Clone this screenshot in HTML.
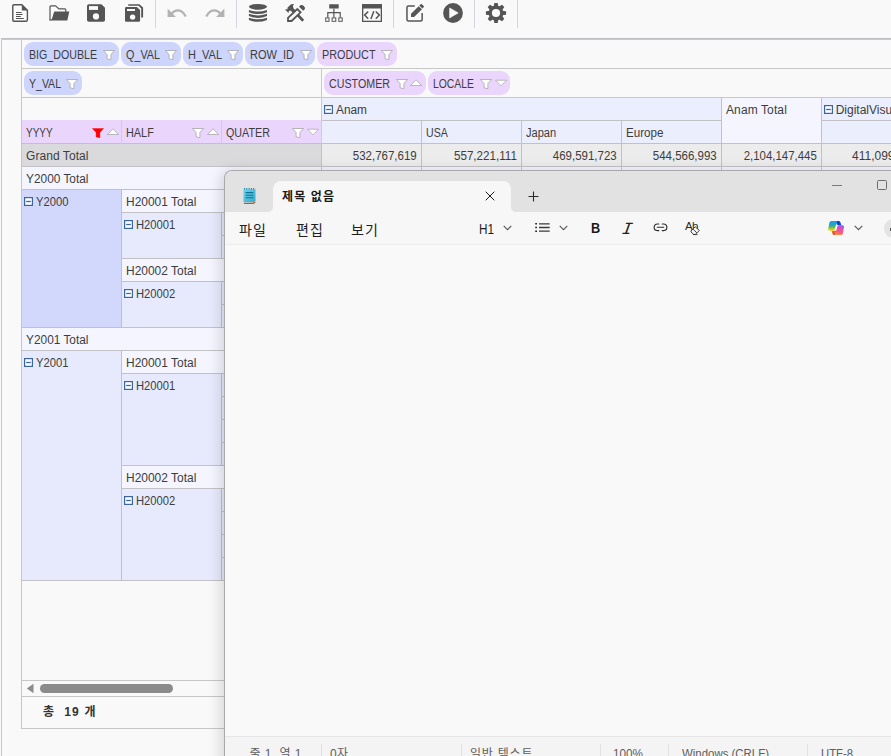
<!DOCTYPE html><html lang="ko"><head>
<meta charset="utf-8">
<title>Pivot</title>
<style>
html,body{margin:0;padding:0;}
body{width:891px;height:756px;overflow:hidden;position:relative;background:#f9f9f9;font-family:"Liberation Sans","Noto Sans CJK KR",sans-serif;font-size:12px;color:#333;}
.abs{position:absolute;}
#tb{position:absolute;left:0;top:0;width:891px;height:38px;background:#f9f9f9;}
#tb svg{position:absolute;}
.sep{position:absolute;top:0;width:1px;height:28px;background:#d3d6e0;}
#tbline{position:absolute;left:1px;top:38px;width:890px;height:1px;background:#bebec5;box-shadow:0 1px 0 #c9c9d0;}
#lline{position:absolute;left:1px;top:38px;width:1px;height:718px;background:#c6c7d2;}
#grid{position:absolute;left:21px;top:39px;width:870px;height:690px;background:#f9f9f9;border-left:1px solid #c6c6c6;border-bottom:1px solid #c6c6c6;box-sizing:border-box;}
.pill{position:absolute;height:24px;border-radius:9px;background:#cdd5fc;box-sizing:border-box;}
.pill.pp{background:#ead6fc;}
.pill span{position:absolute;left:5px;top:1px;line-height:24px;white-space:nowrap;color:#3d3d3d;}
.flt{position:absolute;}
.hl{position:absolute;height:1px;background:#c8c8c8;}
.vl{position:absolute;width:1px;background:#c8c8c8;}
.cell{position:absolute;box-sizing:border-box;border-right:1px solid #c2c2c6;border-bottom:1px solid #c2c2c6;line-height:25px;padding-left:4px;white-space:nowrap;overflow:hidden;color:#3d3d3d;}
.cell.num{text-align:right;padding-right:4px;padding-left:0;}
.cell.num .t{transform-origin:100% 50%;}
.t{display:inline-block;transform-origin:0 50%;white-space:nowrap;}
.mn{display:inline-block;vertical-align:0.2px;margin-right:2.7px;margin-left:-2px;}
.hp{background:#ead6fc;line-height:27px !important;border-right-color:#cfcdd8 !important;}
.hb{background:#ebeefc;}
.hl2{background:#f4f5fe;}
.gt{background:#dadadc;}
.gd{background:#ececec;}
.tot{background:#f4f5fe;}
.rh{background:#e6eafc;}
.sel{background:#d1d8fb;}
.foot{font-weight:bold;font-size:12px;line-height:22px;color:#333;}
#np{position:absolute;left:224px;top:170px;width:700px;height:620px;border-left:1px solid #a9a9ab;border-top:1px solid #a9a9ab;border-radius:8px 0 0 0;background:#e2e2e2;box-shadow:-1px 3px 13px 3px rgba(0,0,0,.13);overflow:hidden;}
#np-in{position:absolute;left:0;top:-1px;width:700px;height:620px;}
#np-title{position:absolute;left:0;top:0;width:700px;height:42px;background:#e2e2e2;}
#np-tab{position:absolute;left:48px;top:11px;width:238px;height:31px;background:#f7f7f7;border-radius:8px 8px 0 0;}
#np-tabl{position:absolute;left:43px;top:37px;width:5px;height:5px;background:radial-gradient(circle at 0 0,#e2e2e2 4.5px,#f7f7f7 5.5px);}
#np-tabr{position:absolute;left:286px;top:37px;width:5px;height:5px;background:radial-gradient(circle at 100% 0,#e2e2e2 4.5px,#f7f7f7 5.5px);}
#np-menu{position:absolute;left:0;top:42px;width:700px;height:32px;background:#f7f7f7;border-bottom:1px solid #ececec;}
#np-text{position:absolute;left:0;top:75px;width:700px;height:491px;background:#f9f9f9;}
#np-status{position:absolute;left:0;top:566px;width:700px;height:60px;background:#f4f4f4;border-top:1px solid #e6e6e6;}
#np-ttl{font-weight:bold;font-size:12px;line-height:22px;color:#1a1a1a;}
.mi{font-size:14px;line-height:20px;color:#1e1e1e;}
.st{font-size:12px;line-height:20px;color:#5e5e5e;}
.ssep{top:574px;width:1px;height:30px;background:#e1e1e1;}

</style>
</head>
<body>
<div id="tb">
<!-- new file -->
<svg style="left:11px;top:3px" width="18" height="20" viewBox="0 0 18 20"><path d="M2.9 1.8H10.8L16.4 7.4V17.1Q16.4 18.2 15.3 18.2H2.9Q1.8 18.2 1.8 17.1V2.9Q1.8 1.8 2.9 1.8Z" fill="#fbfbfb" stroke="#555" stroke-width="1.4"></path><path d="M10.8 1.4L16.8 7.4H10.8Z" fill="#555"></path><path d="M5 9.5H10.7M5 11.5H11.7M5 13.5H9.8M5 15.5H12.8" stroke="#555" stroke-width="1"></path></svg>
<!-- open -->
<svg style="left:48px;top:4px" width="22" height="18" viewBox="0 0 22 18"><path d="M2 16V2.9Q2 1.9 3 1.9H7.6L10.8 4.8H16.8Q17.8 4.8 17.8 5.8V8" fill="#fbfbfb" stroke="#555" stroke-width="1.2" stroke-linejoin="round"></path><path d="M6.2 7.4H21.3L19.3 16.6H3.4Z" fill="#555"></path><path d="M1.4 16H4" stroke="#555" stroke-width="1.2"></path></svg>
<!-- save -->
<svg style="left:87px;top:3px" width="19" height="20" viewBox="0 0 19 20"><path d="M1.8 1.2H14.4L18 4.7V16.9Q18 18.7 16.2 18.7H1.8Q0 18.7 0 16.9V3Q0 1.2 1.8 1.2Z" fill="#555"></path><rect x="2" y="3.1" width="9" height="3.8" fill="#fafafa"></rect><circle cx="9" cy="13.4" r="3.1" fill="#fafafa"></circle></svg>
<!-- save all -->
<svg style="left:124px;top:3px" width="20" height="20" viewBox="0 0 20 20"><path d="M4.2 1.2H15.4L19.1 4.6V14.6H17.2V5.4L14.6 2.8H4.2Z" fill="#555"></path><path d="M2.2 4H12.9L16.1 7V17.5Q16.1 18.7 14.9 18.7H2.2Q1 18.7 1 17.5V5.2Q1 4 2.2 4Z" fill="#555"></path><rect x="3" y="6" width="8" height="2" fill="#fafafa"></rect><circle cx="8.6" cy="14.1" r="2.7" fill="#fafafa"></circle></svg>
<div class="sep" style="left:155px"></div>
<!-- undo -->
<svg style="left:166px;top:7px" width="21" height="12" viewBox="0 0 21 12"><path d="M1.6 1.5V9.9H9.9Z" fill="#b3b3b3"></path><path d="M5.6 6.6C9 2.4 15.6 1.2 19.7 9.6" fill="none" stroke="#b3b3b3" stroke-width="2.2"></path></svg>
<!-- redo -->
<svg style="left:204.8px;top:7px" width="21" height="12" viewBox="0 0 21 12"><g transform="translate(21,0) scale(-1,1)"><path d="M1.6 1.5V9.9H9.9Z" fill="#b3b3b3"></path><path d="M5.6 6.6C9 2.4 15.6 1.2 19.7 9.6" fill="none" stroke="#b3b3b3" stroke-width="2.2"></path></g></svg>
<div class="sep" style="left:236px"></div>
<!-- db -->
<svg style="left:248px;top:3px" width="20" height="20" viewBox="0 0 20 20"><ellipse cx="9.95" cy="3.8" rx="9.05" ry="2.9" fill="#555"></ellipse><path d="M0.9 6.9Q10 10.1 19 6.9V9.2Q10 12.9 0.9 9.2Z" fill="#555"></path><path d="M0.9 10.8Q10 14.0 19 10.8V13.1Q10 16.8 0.9 13.1Z" fill="#555"></path><path d="M0.9 14.7Q10 17.9 19 14.7V17.0Q10 20.7 0.9 17.0Z" fill="#555"></path></svg>
<!-- tools -->
<svg style="left:282px;top:2px" width="26" height="22" viewBox="0 0 26 22"><path d="M10.6 7.6L21.2 18.8" stroke="#555" stroke-width="2.7"></path><path d="M3 7.6L5.4 7.2L5.6 5.4L9 2.2L12 1.9L10.9 4L11.6 6.6L13.6 8.6L11 11L8.8 8.7L7 8.7L6.5 10.9Z" fill="#555"></path><path d="M6 15.8L15.3 7.1L18.6 10.3L9.6 19H6Z" fill="#fafafa" stroke="#555" stroke-width="1.8" stroke-linejoin="miter"></path><path d="M17 4.7L18.8 3.1Q20 2.5 21.2 3.5L22.6 5Q23.5 6.2 22.6 7.3L21.2 8.7Z" fill="#555"></path></svg>
<!-- org -->
<svg style="left:324px;top:4px" width="20" height="19" viewBox="0 0 20 19"><rect x="5.2" y="0.2" width="9.5" height="4.3" rx="0.5" fill="#555"></rect><path d="M9.9 4.5V13.4M3.8 13.4V8.6H16.2V13.4" fill="none" stroke="#555" stroke-width="1.2"></path><rect x="1.7" y="13.9" width="3.3" height="3.4" fill="#fdfdfd" stroke="#555" stroke-width="1"></rect><rect x="8.1" y="13.9" width="3.7" height="3.4" fill="#fdfdfd" stroke="#555" stroke-width="1"></rect><rect x="14.8" y="13.9" width="3.4" height="3.4" fill="#fdfdfd" stroke="#555" stroke-width="1"></rect></svg>
<!-- code -->
<svg style="left:361px;top:3px" width="22" height="20" viewBox="0 0 22 20"><rect x="1.65" y="1.85" width="18.7" height="16.5" fill="#fafafa" stroke="#555" stroke-width="1.3"></rect><rect x="1" y="1.2" width="20" height="4.3" fill="#555"></rect><path d="M7.2 8.5L3.6 12.1L7.2 15.7M14.8 8.5L18.4 12.1L14.8 15.7M12.8 8.2L9.9 15.9" fill="none" stroke="#555" stroke-width="1.5"></path></svg>
<div class="sep" style="left:393px"></div>
<!-- edit -->
<svg style="left:405px;top:3px" width="20" height="20" viewBox="0 0 20 20"><path d="M9.8 2.95H3.5Q1.95 2.95 1.95 4.5V16.5Q1.95 18.05 3.5 18.05H15.6Q17.15 18.05 17.15 16.5V9.9" fill="none" stroke="#555" stroke-width="1.5"></path><path d="M6 10.8V13.9H9.1L17 6.3L13.7 3.2Z" fill="#555"></path><path d="M14.3 2.6L16.2 0.8L19.2 3.6L17.4 5.5Z" fill="#555"></path></svg>
<!-- play -->
<svg style="left:443px;top:3px" width="20" height="20" viewBox="0 0 20 20"><circle cx="10" cy="10" r="9.9" fill="#555"></circle><path d="M6.6 4.9L15.2 9.9L6.6 14.9Z" fill="#fafafa" stroke="#fafafa" stroke-width="0.6" stroke-linejoin="round"></path></svg>
<div class="sep" style="left:474px"></div>
<!-- gear -->
<svg style="left:485px;top:2px" width="22" height="22" viewBox="-11 -11 22 22"><g fill="#555"><circle r="7.4"></circle><path transform="rotate(0)" d="M-2.3 -6.4L-1.8 -9.6Q-1.7 -10.1 -1.2 -10.1H1.2Q1.7 -10.1 1.8 -9.6L2.3 -6.4Z"></path><path transform="rotate(45)" d="M-2.3 -6.4L-1.8 -9.6Q-1.7 -10.1 -1.2 -10.1H1.2Q1.7 -10.1 1.8 -9.6L2.3 -6.4Z"></path><path transform="rotate(90)" d="M-2.3 -6.4L-1.8 -9.6Q-1.7 -10.1 -1.2 -10.1H1.2Q1.7 -10.1 1.8 -9.6L2.3 -6.4Z"></path><path transform="rotate(135)" d="M-2.3 -6.4L-1.8 -9.6Q-1.7 -10.1 -1.2 -10.1H1.2Q1.7 -10.1 1.8 -9.6L2.3 -6.4Z"></path><path transform="rotate(180)" d="M-2.3 -6.4L-1.8 -9.6Q-1.7 -10.1 -1.2 -10.1H1.2Q1.7 -10.1 1.8 -9.6L2.3 -6.4Z"></path><path transform="rotate(225)" d="M-2.3 -6.4L-1.8 -9.6Q-1.7 -10.1 -1.2 -10.1H1.2Q1.7 -10.1 1.8 -9.6L2.3 -6.4Z"></path><path transform="rotate(270)" d="M-2.3 -6.4L-1.8 -9.6Q-1.7 -10.1 -1.2 -10.1H1.2Q1.7 -10.1 1.8 -9.6L2.3 -6.4Z"></path><path transform="rotate(315)" d="M-2.3 -6.4L-1.8 -9.6Q-1.7 -10.1 -1.2 -10.1H1.2Q1.7 -10.1 1.8 -9.6L2.3 -6.4Z"></path></g><circle r="4.1" fill="#fafafa"></circle></svg>
<div class="sep" style="left:517px"></div>
</div>
<div id="grid"></div>
<div id="tbline"></div><div id="lline"></div>
<div class="pill " style="left:24px;top:42px;width:94.5px"><span class="t" style="transform: scaleX(0.8865);">BIG_DOUBLE</span></div>
<svg class="flt" style="left:103px;top:49.6px" width="12" height="11" viewBox="0 0 12 11"><path d="M0.4 0.5H11.6L7.9 4.6V9.7L4.1 8.9V4.6Z" fill="#ffffff" stroke="#a6a6a6" stroke-width="0.8" stroke-linejoin="round"></path></svg><div class="pill " style="left:121px;top:42px;width:59.5px"><span class="t" style="transform: scaleX(0.8992);">Q_VAL</span></div>
<svg class="flt" style="left:165px;top:49.6px" width="12" height="11" viewBox="0 0 12 11"><path d="M0.4 0.5H11.6L7.9 4.6V9.7L4.1 8.9V4.6Z" fill="#ffffff" stroke="#a6a6a6" stroke-width="0.8" stroke-linejoin="round"></path></svg><div class="pill " style="left:183px;top:42px;width:59.5px"><span class="t" style="transform: scaleX(0.9154);">H_VAL</span></div>
<svg class="flt" style="left:227px;top:49.6px" width="12" height="11" viewBox="0 0 12 11"><path d="M0.4 0.5H11.6L7.9 4.6V9.7L4.1 8.9V4.6Z" fill="#ffffff" stroke="#a6a6a6" stroke-width="0.8" stroke-linejoin="round"></path></svg><div class="pill " style="left:245px;top:42px;width:69.5px"><span class="t" style="transform: scaleX(0.9167);">ROW_ID</span></div>
<svg class="flt" style="left:299.5px;top:49.6px" width="12" height="11" viewBox="0 0 12 11"><path d="M0.4 0.5H11.6L7.9 4.6V9.7L4.1 8.9V4.6Z" fill="#ffffff" stroke="#a6a6a6" stroke-width="0.8" stroke-linejoin="round"></path></svg><div class="pill pp" style="left:317px;top:42px;width:80px"><span class="t" style="transform: scaleX(0.9015);">PRODUCT</span></div>
<svg class="flt" style="left:381px;top:49.6px" width="12" height="11" viewBox="0 0 12 11"><path d="M0.4 0.5H11.6L7.9 4.6V9.7L4.1 8.9V4.6Z" fill="#ffffff" stroke="#a6a6a6" stroke-width="0.8" stroke-linejoin="round"></path></svg><div class="pill " style="left:24px;top:71px;width:58px"><span class="t" style="transform: scaleX(0.8775);">Y_VAL</span></div>
<svg class="flt" style="left:66px;top:78.6px" width="12" height="11" viewBox="0 0 12 11"><path d="M0.4 0.5H11.6L7.9 4.6V9.7L4.1 8.9V4.6Z" fill="#ffffff" stroke="#a6a6a6" stroke-width="0.8" stroke-linejoin="round"></path></svg><div class="pill pp" style="left:324px;top:71px;width:101.7px"><span class="t" style="transform: scaleX(0.8911);">CUSTOMER</span></div>
<svg class="flt" style="left:396px;top:78.6px" width="12" height="11" viewBox="0 0 12 11"><path d="M0.4 0.5H11.6L7.9 4.6V9.7L4.1 8.9V4.6Z" fill="#ffffff" stroke="#a6a6a6" stroke-width="0.8" stroke-linejoin="round"></path></svg><svg class="flt" style="left:410.4px;top:79.3px" width="12" height="8" viewBox="0 0 12 8"><path d="M0.5 6.5L6 0.8L11.5 6.5Z" fill="#fff" stroke="#a9a9a9" stroke-width="0.8" stroke-linejoin="round"></path></svg><div class="pill pp" style="left:428px;top:71px;width:82px"><span class="t" style="transform: scaleX(0.8657);">LOCALE</span></div>
<svg class="flt" style="left:480px;top:78.6px" width="12" height="11" viewBox="0 0 12 11"><path d="M0.4 0.5H11.6L7.9 4.6V9.7L4.1 8.9V4.6Z" fill="#ffffff" stroke="#a6a6a6" stroke-width="0.8" stroke-linejoin="round"></path></svg><svg class="flt" style="left:494.5px;top:79px" width="12" height="8" viewBox="0 0 12 8"><path d="M0.5 1.2L6 6.9L11.5 1.2Z" fill="#fff" stroke="#a9a9a9" stroke-width="0.8" stroke-linejoin="round"></path></svg><div class="hl" style="left:22px;top:68px;width:869px"></div>
<div class="hl" style="left:22px;top:97px;width:869px"></div>
<div class="vl" style="left:321px;top:69px;height:52px"></div>
<div class="cell hb" style="left:322px;top:98px;width:400px;height:23px;"><svg class="mn" width="9" height="9" viewBox="0 0 9 9"><rect x="0.6" y="0.6" width="7.8" height="7.8" fill="#fff" stroke="#3a65a4" stroke-width="1.2"></rect><path d="M2.2 4.5H6.8" stroke="#3a65a4" stroke-width="1.3"></path></svg><span class="t" style="transform: scaleX(0.9885);">Anam</span></div>
<div class="cell hl2" style="left:722px;top:98px;width:100px;height:46px;"><span class="t" style="letter-spacing: 0.11px; margin-right: -0.11px;">Anam Total</span></div>
<div class="cell hb" style="left:822px;top:98px;width:80px;height:23px;"><svg class="mn" width="9" height="9" viewBox="0 0 9 9"><rect x="0.6" y="0.6" width="7.8" height="7.8" fill="#fff" stroke="#3a65a4" stroke-width="1.2"></rect><path d="M2.2 4.5H6.8" stroke="#3a65a4" stroke-width="1.3"></path></svg><span class="t">DigitalVisual</span></div>
<div class="cell hp" style="left:22px;top:120px;width:100px;height:24px;"><span class="t" style="transform: scaleX(0.834);">YYYY</span></div>
<div class="cell hp" style="left:122px;top:120px;width:100px;height:24px;"><span class="t" style="transform: scaleX(0.9059);">HALF</span></div>
<div class="cell hp" style="left:222px;top:120px;width:100px;height:24px;"><span class="t" style="transform: scaleX(0.8936);">QUATER</span></div>
<svg class="flt" style="left:92px;top:127.5px" width="12" height="11" viewBox="0 0 12 11"><path d="M0.4 0.5H11.6L7.9 4.6V9.7L4.1 8.9V4.6Z" fill="#ff0000" stroke="#f00" stroke-width="0.4" stroke-linejoin="round"></path></svg><svg class="flt" style="left:106.5px;top:128.2px" width="12" height="8" viewBox="0 0 12 8"><path d="M0.5 6.5L6 0.8L11.5 6.5Z" fill="#fff" stroke="#a9a9a9" stroke-width="0.8" stroke-linejoin="round"></path></svg><svg class="flt" style="left:192px;top:127.5px" width="12" height="11" viewBox="0 0 12 11"><path d="M0.4 0.5H11.6L7.9 4.6V9.7L4.1 8.9V4.6Z" fill="#ffffff" stroke="#a6a6a6" stroke-width="0.8" stroke-linejoin="round"></path></svg><svg class="flt" style="left:206.6px;top:128.2px" width="12" height="8" viewBox="0 0 12 8"><path d="M0.5 6.5L6 0.8L11.5 6.5Z" fill="#fff" stroke="#a9a9a9" stroke-width="0.8" stroke-linejoin="round"></path></svg><svg class="flt" style="left:292px;top:127.5px" width="12" height="11" viewBox="0 0 12 11"><path d="M0.4 0.5H11.6L7.9 4.6V9.7L4.1 8.9V4.6Z" fill="#ffffff" stroke="#a6a6a6" stroke-width="0.8" stroke-linejoin="round"></path></svg><svg class="flt" style="left:306.5px;top:128.4px" width="12" height="8" viewBox="0 0 12 8"><path d="M0.5 1.2L6 6.9L11.5 1.2Z" fill="#fff" stroke="#a9a9a9" stroke-width="0.8" stroke-linejoin="round"></path></svg><div class="cell hb" style="left:322px;top:121px;width:100px;height:23px;"></div>
<div class="cell hb" style="left:422px;top:121px;width:100px;height:23px;"><span class="t" style="transform: scaleX(0.883);">USA</span></div>
<div class="cell hb" style="left:522px;top:121px;width:100px;height:23px;"><span class="t" style="transform: scaleX(0.9235);">Japan</span></div>
<div class="cell hb" style="left:622px;top:121px;width:100px;height:23px;"><span class="t" style="transform: scaleX(0.9689);">Europe</span></div>
<div class="cell hb" style="left:822px;top:121px;width:80px;height:23px;"></div>
<div class="cell gt" style="left:22px;top:144px;width:300px;height:23px;"><span class="t" style="letter-spacing: 0.067px; margin-right: -0.067px;">Grand Total</span></div>
<div class="cell gd num" style="left:322px;top:144px;width:100px;height:23px;"><span class="t" style="transform: scaleX(0.959);">532,767,619</span></div>
<div class="cell gd num" style="left:422px;top:144px;width:100px;height:23px;"><span class="t" style="transform: scaleX(0.9699);">557,221,111</span></div>
<div class="cell gd num" style="left:522px;top:144px;width:100px;height:23px;"><span class="t" style="transform: scaleX(0.959);">469,591,723</span></div>
<div class="cell gd num" style="left:622px;top:144px;width:100px;height:23px;"><span class="t" style="transform: scaleX(0.959);">544,566,993</span></div>
<div class="cell gd num" style="left:722px;top:144px;width:100px;height:23px;"><span class="t" style="transform: scaleX(0.9524);">2,104,147,445</span></div>
<div class="cell gd num" style="left:822px;top:144px;width:80px;height:23px;text-align:left;padding-left:30px"><span class="t">411,099,</span></div>
<div class="cell tot" style="left:22px;top:167px;width:880px;height:23px;"><span class="t" style="transform: scaleX(0.9894);">Y2000 Total</span></div>
<div class="vl" style="left:321px;top:167px;height:4px"></div>
<div class="vl" style="left:421px;top:167px;height:4px"></div>
<div class="vl" style="left:521px;top:167px;height:4px"></div>
<div class="vl" style="left:621px;top:167px;height:4px"></div>
<div class="vl" style="left:721px;top:167px;height:4px"></div>
<div class="vl" style="left:821px;top:167px;height:4px"></div>
<div class="cell sel" style="left:22px;top:190px;width:100px;height:138px;"><svg class="mn" width="9" height="9" viewBox="0 0 9 9"><rect x="0.6" y="0.6" width="7.8" height="7.8" fill="#fff" stroke="#3a65a4" stroke-width="1.2"></rect><path d="M2.2 4.5H6.8" stroke="#3a65a4" stroke-width="1.3"></path></svg><span class="t" style="transform: scaleX(0.9365);">Y2000</span></div>
<div class="cell tot" style="left:122px;top:190px;width:200px;height:23px;"><span class="t" style="transform: scaleX(0.9972);">H20001 Total</span></div>
<div class="cell rh" style="left:122px;top:213px;width:100px;height:46px;"><svg class="mn" width="9" height="9" viewBox="0 0 9 9"><rect x="0.6" y="0.6" width="7.8" height="7.8" fill="#fff" stroke="#3a65a4" stroke-width="1.2"></rect><path d="M2.2 4.5H6.8" stroke="#3a65a4" stroke-width="1.3"></path></svg><span class="t" style="transform: scaleX(0.9347);">H20001</span></div>
<div class="cell rh" style="left:222px;top:213px;width:100px;height:23px;"></div>
<div class="cell rh" style="left:222px;top:236px;width:100px;height:23px;"></div>
<div class="cell tot" style="left:122px;top:259px;width:200px;height:23px;"><span class="t" style="transform: scaleX(0.9972);">H20002 Total</span></div>
<div class="cell rh" style="left:122px;top:282px;width:100px;height:46px;"><svg class="mn" width="9" height="9" viewBox="0 0 9 9"><rect x="0.6" y="0.6" width="7.8" height="7.8" fill="#fff" stroke="#3a65a4" stroke-width="1.2"></rect><path d="M2.2 4.5H6.8" stroke="#3a65a4" stroke-width="1.3"></path></svg><span class="t" style="transform: scaleX(0.9347);">H20002</span></div>
<div class="cell rh" style="left:222px;top:282px;width:100px;height:23px;"></div>
<div class="cell rh" style="left:222px;top:305px;width:100px;height:23px;"></div>
<div class="cell tot" style="left:22px;top:328px;width:880px;height:23px;"><span class="t" style="transform: scaleX(0.9894);">Y2001 Total</span></div>
<div class="cell rh" style="left:22px;top:351px;width:100px;height:230px;"><svg class="mn" width="9" height="9" viewBox="0 0 9 9"><rect x="0.6" y="0.6" width="7.8" height="7.8" fill="#fff" stroke="#3a65a4" stroke-width="1.2"></rect><path d="M2.2 4.5H6.8" stroke="#3a65a4" stroke-width="1.3"></path></svg><span class="t" style="transform: scaleX(0.9365);">Y2001</span></div>
<div class="cell tot" style="left:122px;top:351px;width:200px;height:23px;"><span class="t" style="transform: scaleX(0.9972);">H20001 Total</span></div>
<div class="cell rh" style="left:122px;top:374px;width:100px;height:92px;"><svg class="mn" width="9" height="9" viewBox="0 0 9 9"><rect x="0.6" y="0.6" width="7.8" height="7.8" fill="#fff" stroke="#3a65a4" stroke-width="1.2"></rect><path d="M2.2 4.5H6.8" stroke="#3a65a4" stroke-width="1.3"></path></svg><span class="t" style="transform: scaleX(0.9347);">H20001</span></div>
<div class="cell rh" style="left:222px;top:374px;width:100px;height:23px;"></div>
<div class="cell rh" style="left:222px;top:397px;width:100px;height:23px;"></div>
<div class="cell rh" style="left:222px;top:420px;width:100px;height:23px;"></div>
<div class="cell rh" style="left:222px;top:443px;width:100px;height:23px;"></div>
<div class="cell tot" style="left:122px;top:466px;width:200px;height:23px;"><span class="t" style="transform: scaleX(0.9972);">H20002 Total</span></div>
<div class="cell rh" style="left:122px;top:489px;width:100px;height:92px;"><svg class="mn" width="9" height="9" viewBox="0 0 9 9"><rect x="0.6" y="0.6" width="7.8" height="7.8" fill="#fff" stroke="#3a65a4" stroke-width="1.2"></rect><path d="M2.2 4.5H6.8" stroke="#3a65a4" stroke-width="1.3"></path></svg><span class="t" style="transform: scaleX(0.9347);">H20002</span></div>
<div class="cell rh" style="left:222px;top:489px;width:100px;height:23px;"></div>
<div class="cell rh" style="left:222px;top:512px;width:100px;height:23px;"></div>
<div class="cell rh" style="left:222px;top:535px;width:100px;height:23px;"></div>
<div class="cell rh" style="left:222px;top:558px;width:100px;height:23px;"></div>
<div class="hl" style="left:22px;top:680px;width:869px"></div>
<div class="hl" style="left:22px;top:696px;width:869px"></div>
<svg class="flt" style="left:26px;top:683px" width="9" height="11" viewBox="0 0 9 11"><path d="M7.5 0.8V10.2L0.8 5.5Z" fill="#8c8c8c"></path></svg>
<div class="abs" style="left:40px;top:684px;width:133px;height:9px;border-radius:5px;background:#8b8b8b"></div>
<div class="abs foot" style="left:43px;top:701px;"><span class="t" style="letter-spacing: 1.177px; margin-right: -1.177px;">총&nbsp;&nbsp;19&nbsp;개</span></div>
<div id="np"><div id="np-in">
  <div id="np-title"></div>
  <div id="np-tab"></div>
  <div id="np-tabl"></div><div id="np-tabr"></div>
  <div id="np-menu"></div>
  <div id="np-text"></div>
  <div id="np-status"></div>
  <svg class="abs" style="left:17.6px;top:17px" width="13" height="18" viewBox="0 0 13 18">
    <defs><linearGradient id="npg" x1="0" y1="0" x2="1" y2="1"><stop offset="0" stop-color="#6fd3ea"></stop><stop offset="1" stop-color="#35a9cf"></stop></linearGradient></defs>
    <path d="M1 16.3H10.5L12.3 14.8" stroke="#c4571b" stroke-width="1.2" fill="none"></path>
    <path d="M0.5 2.2H12.5V13.6L11 15.3H0.5Z" fill="url(#npg)"></path>
    <path d="M1.5 1V2.6M3.8 1V2.6M6.1 1V2.6M8.4 1V2.6M10.7 1V2.6" stroke="#1b86aa" stroke-width="1.1"></path>
    <path d="M2.6 5.6H10.4M2.6 8.2H10.4M2.6 10.8H10.4" stroke="#0d7395" stroke-width="1.1"></path>
  </svg>
  <div class="abs" id="np-ttl" style="left:57px;top:16px;"><span class="t" style="letter-spacing: 1.125px; margin-right: -1.125px;">제목 없음</span></div>
  <svg class="abs" style="left:260px;top:21px" width="10" height="10" viewBox="0 0 10 10"><path d="M0.7 0.7L9.3 9.3M9.3 0.7L0.7 9.3" stroke="#1c1c1c" stroke-width="1" fill="none"></path></svg>
  <svg class="abs" style="left:303px;top:21px" width="11" height="11" viewBox="0 0 11 11"><path d="M5.5 0.5V10.5M0.5 5.5H10.5" stroke="#2a2a2a" stroke-width="1.1" fill="none"></path></svg>
  <div class="abs" style="left:607px;top:15px;width:10px;height:1px;background:#7b7b7b"></div>
  <div class="abs" style="left:652px;top:10.3px;width:8px;height:8px;border:1px solid #6d6d6d;border-radius:1.5px;box-sizing:content-box"></div>

  <div class="abs mi" style="left:14px;top:49.5px"><span class="t" style="letter-spacing: 1.234px; margin-right: -1.234px;">파일</span></div>
  <div class="abs mi" style="left:71px;top:49.5px"><span class="t" style="letter-spacing: 1.234px; margin-right: -1.234px;">편집</span></div>
  <div class="abs mi" style="left:126px;top:49.5px"><span class="t" style="letter-spacing: 1.234px; margin-right: -1.234px;">보기</span></div>

  <div class="abs mi" style="left:253.5px;top:48.5px"><span class="t" style="transform: scaleX(0.8377);">H1</span></div>
  <svg class="abs chev" style="left:278px;top:55px" width="9" height="6" viewBox="0 0 9 6"><path d="M0.7 0.8L4.5 4.6L8.3 0.8" stroke="#555" stroke-width="1.1" fill="none"></path></svg>
  <svg class="abs" style="left:309.5px;top:52px" width="16" height="12" viewBox="0 0 16 12"><path d="M4 1.8H14.7M4 5.5H14.7M4 9.2H14.7" stroke="#3a3a3a" stroke-width="1.3" fill="none"></path><path d="M0.2 1.8H2M0.2 5.5H2M0.2 9.2H2" stroke="#2b2b2b" stroke-width="1.6" fill="none"></path></svg>
  <svg class="abs chev" style="left:334px;top:55px" width="9" height="6" viewBox="0 0 9 6"><path d="M0.7 0.8L4.5 4.6L8.3 0.8" stroke="#555" stroke-width="1.1" fill="none"></path></svg>
  <div class="abs" style="left:365.5px;top:47.5px;font:bold 15.5px/20px 'Liberation Sans',sans-serif;color:#1a1a1a;transform:scaleX(.82);transform-origin:0 50%">B</div>
  <div class="abs" style="left:397px;top:48.5px;font:17px/22px 'Liberation Mono',monospace;color:#222;transform:skewX(-20deg)">I</div>
  <svg class="abs" style="left:427.5px;top:53.3px" width="15" height="9" viewBox="0 0 15 9"><path d="M5.8 1H4.4A3.3 3.3 0 0 0 4.4 7.6H5.8M9.2 1H10.6A3.3 3.3 0 0 1 10.6 7.6H9.2M4.3 4.3H10.7" stroke="#2b2b2b" stroke-width="1.1" fill="none" stroke-linecap="round"></path></svg>
  <div class="abs" style="left:460px;top:48px;font:11.5px/16px 'Liberation Sans',sans-serif;color:#2a2a2a;letter-spacing:-0.6px">Ab</div>
  <svg class="abs" style="left:464.6px;top:56.2px" width="11" height="10" viewBox="0 0 11 10"><path d="M1 4.8L5.2 0.8L9.4 4.4L5.4 8.4H3.6L1 6Z" fill="#f8f8f8" stroke="#2b2b2b" stroke-width="0.9" stroke-linejoin="round"></path><path d="M3 3.2L6.8 6.8" stroke="#2b2b2b" stroke-width="0.9"></path><path d="M3 8.6H7.6" stroke="#2b2b2b" stroke-width="0.8"></path></svg>

  <svg class="abs" style="left:599px;top:46px" width="24" height="24" viewBox="0 0 24 24">
    <defs>
      <linearGradient id="cg1" x1="0" y1="0" x2="0" y2="1"><stop offset="0" stop-color="#1a9cf2"></stop><stop offset="0.35" stop-color="#1fa6c8"></stop><stop offset="0.6" stop-color="#4fb868"></stop><stop offset="0.85" stop-color="#d6d21a"></stop><stop offset="1" stop-color="#f7cf0a"></stop></linearGradient>
      <linearGradient id="cg2" x1="0.6" y1="0" x2="0.3" y2="1"><stop offset="0" stop-color="#a352f2"></stop><stop offset="0.35" stop-color="#e650b0"></stop><stop offset="0.65" stop-color="#f4587a"></stop><stop offset="1" stop-color="#f8923c"></stop></linearGradient>
      <linearGradient id="cg3" x1="0" y1="0" x2="1" y2="1"><stop offset="0" stop-color="#f4702a"></stop><stop offset="1" stop-color="#e8402a"></stop></linearGradient>
    </defs>
    <path d="M11.6 5H14.6Q15.8 5 16.3 6.2L17.4 9.2H14.2L12.8 8.4Z" fill="#0b44d2"></path>
    <path d="M7.6 14.8H12.2L11.6 17.6Q11.3 19.1 10.3 19.1H10.1Q9 19.1 8.6 17.9Z" fill="url(#cg3)"></path>
    <path d="M7.4 4.9H12.6Q13.2 4.9 13 5.6L10.6 13.6Q10.2 14.8 9 14.8H5.6Q3.9 14.8 4.2 13.1L5.4 6.6Q5.8 4.9 7.4 4.9Z" fill="url(#cg1)"></path>
    <path d="M14.9 9.2H18.4Q20.4 9.2 20 11.2L18.8 17.4Q18.4 19.1 16.8 19.1H11.4Q10.9 19.1 11.1 18.4L13.4 10.4Q13.8 9.2 14.9 9.2Z" fill="url(#cg2)"></path>
  </svg>
  <svg class="abs chev" style="left:629px;top:55px" width="9" height="6" viewBox="0 0 9 6"><path d="M0.7 0.8L4.5 4.6L8.3 0.8" stroke="#555" stroke-width="1.1" fill="none"></path></svg>
  <div class="abs" style="left:659px;top:49px;width:19px;height:19px;border-radius:10px;background:#e3e3e3"></div><div class="abs" style="left:665px;top:58px;width:2px;height:3px;background:#555"></div>

  <div class="abs st" style="left:24.5px;top:574px"><span class="t" style="letter-spacing: 0.462px; margin-right: -0.462px;">줄 1, 열 1</span></div>
  <div class="abs ssep" style="left:96px"></div>
  <div class="abs st" style="left:105px;top:574px"><span class="t" style="letter-spacing: 0.281px; margin-right: -0.281px;">0자</span></div>
  <div class="abs ssep" style="left:236px"></div>
  <div class="abs st" style="left:245px;top:574px"><span class="t" style="letter-spacing: 0.791px; margin-right: -0.791px;">일반 텍스트</span></div>
  <div class="abs ssep" style="left:375px"></div>
  <div class="abs st" style="left:388px;top:574px"><span class="t" style="transform: scaleX(0.9771);">100%</span></div>
  <div class="abs ssep" style="left:443px"></div>
  <div class="abs st" style="left:457px;top:574px"><span class="t" style="transform: scaleX(0.9524);">Windows (CRLF)</span></div>
  <div class="abs ssep" style="left:582px"></div>
  <div class="abs st" style="left:595.5px;top:574px"><span class="t" style="transform: scaleX(0.9412);">UTF-8</span></div>
</div></div>


</body></html>
